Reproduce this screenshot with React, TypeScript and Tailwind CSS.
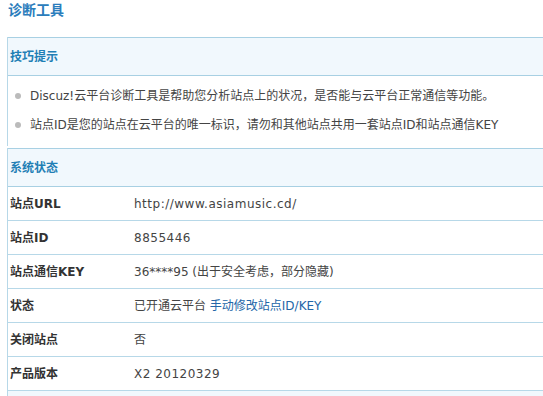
const font = { fontFamily: '"DejaVu Sans", "Noto Sans CJK SC", sans-serif' };

const rows: { label: string; value: React.ReactNode; latin?: boolean }[] = [
  { label: "站点URL", value: "http://www.asiamusic.cd/", latin: true },
  { label: "站点ID", value: "8855446", latin: true },
  { label: "站点通信KEY", value: "36****95 (出于安全考虑，部分隐藏)" },
  {
    label: "状态",
    value: (
      <>
        已开通云平台 <a className="text-[#2366a8]">手动修改站点ID/KEY</a>
      </>
    ),
  },
  { label: "关闭站点", value: "否" },
  { label: "产品版本", value: "X2 20120329", latin: true },
];

const tips = [
  "Discuz!云平台诊断工具是帮助您分析站点上的状况，是否能与云平台正常通信等功能。",
  "站点ID是您的站点在云平台的唯一标识，请勿和其他站点共用一套站点ID和站点通信KEY",
];

export default function App() {
  return (
    <div className="h-[396px] w-[543px] overflow-hidden bg-white text-[12px] text-[#333]" style={font}>
      <h3 className="pl-2 pt-[2px] text-[14px] font-bold leading-[17px] text-[#2b7dbc]">诊断工具</h3>

      <div className="ml-[7px] mt-[18px] w-[560px] border-l border-[#b7d8e8]">
        <div className="flex h-[39px] items-center border-y border-[#a8d0e3] bg-[#f1f8fd] pl-[2px] font-bold text-[#1f7fb5]">
          技巧提示
        </div>
        <ul className="pb-[7px] pt-[5px]">
          {tips.map((t) => (
            <li key={t} className="flex h-[29px] items-center text-[#444]">
              <span className="ml-[7px] mr-[9px] h-[6px] w-[6px] rounded-full bg-[#bbb]" />
              {t}
            </li>
          ))}
        </ul>
      </div>

      <div className="ml-[7px] mt-[2px] w-[560px] border-l border-[#b7d8e8]">
        <div className="flex h-[39px] items-center border-y border-[#a8d0e3] bg-[#f1f8fd] pl-[2px] font-bold text-[#1f7fb5]">
          系统状态
        </div>
        {rows.map((r) => (
          <div key={r.label} className="flex h-[34px] items-center border-b border-[#b7d8e8]">
            <div className="w-[126px] pl-[2px] font-bold text-[#333]">{r.label}</div>
            <div className={r.latin ? "tracking-[0.5px] text-[#444]" : "text-[#444]"}>{r.value}</div>
          </div>
        ))}
        <div className="h-[20px] bg-[#f1f8fd]" />
      </div>
    </div>
  );
}
